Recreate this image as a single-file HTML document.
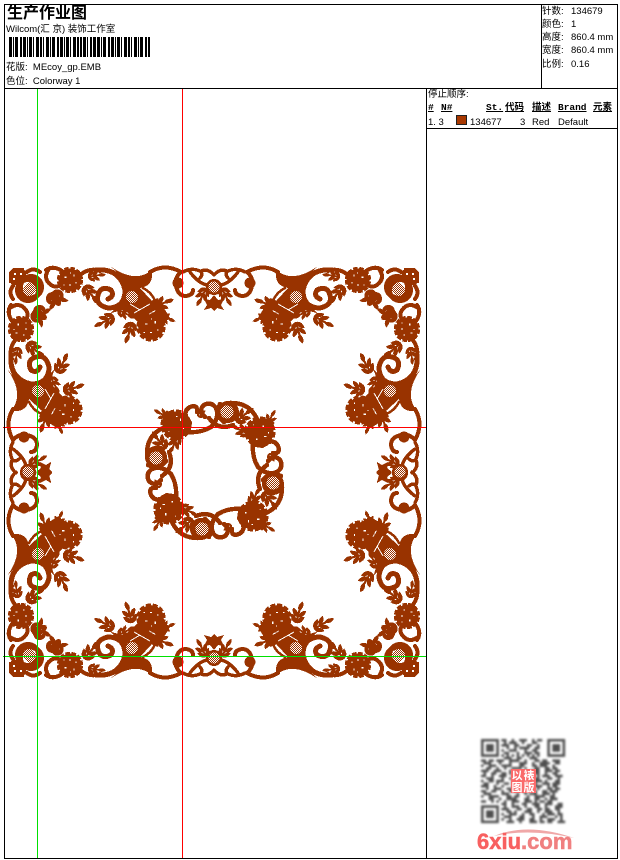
<!DOCTYPE html>
<html><head><meta charset="utf-8"><style>
html,body{margin:0;padding:0;background:#fff}
#p{position:relative;width:620px;height:860px;overflow:hidden;background:#fff;font:9px/12px "Liberation Sans","WenQuanYi Zen Hei","Noto Sans CJK SC",sans-serif;color:#000}
#p div{position:absolute;white-space:nowrap}
.b{background:#000}
.h{font:bold 9.5px/12px "Liberation Mono","WenQuanYi Zen Hei","Noto Sans CJK SC",monospace;text-decoration:underline}
svg{position:absolute;left:0;top:0}
</style></head><body><div id="p">
<svg width="620" height="860" viewBox="0 0 620 860">
<defs>
<pattern id="d" width="2" height="2" patternUnits="userSpaceOnUse"><rect width="2" height="2" fill="#930"/><rect width="1" height="1" fill="#fff"/><rect x="1" y="1" width="1" height="1" fill="#fff"/></pattern>
<g id="f"><circle r="10.5" fill="#930"/><circle r="10.5" fill="none" stroke="#930" stroke-width="3" stroke-dasharray="4 1.5"/><path d="M-5-3h2v1h-2zM3-5h1v2h-1zM-1 4h2v1h-2zM5 2h1v1h-1zM-6 4h1v1h-1zM0-7h1v1h-1z" fill="#fff"/></g>
<path id="l" d="M0 0Q0-6 8-7Q8-1 0 0Z" fill="#930"/>
<g id="s"><path d="M0 0L16 0" stroke="#930" stroke-width="2.2"/><use href="#l" x="0"/><use href="#l" transform="translate(0 0) scale(1 -1)"/><use href="#l" x="6"/><use href="#l" transform="translate(6 0) scale(1 -1)"/><use href="#l" transform="translate(12 0) rotate(45)"/></g>
<g id="a">
<path d="M9 272L14 268L24 268L25 277L21 285L12 285L9 280Z" fill="#930"/>
<path d="M14 273h2v2h-2zM19 272h2v2h-2zM14 279h2v2h-2z" fill="#fff"/>
<g fill="none" stroke="#930" stroke-width="4" stroke-linecap="round">
<circle cx="31" cy="287" r="10.5" stroke-width="5"/>
<path d="M27 272Q33 267 40 272"/>
<path d="M49 269Q42 278 51 285Q58 289 61 283"/>
<path d="M46 270Q53 265 62 271"/>
<path d="M80 275Q90 267 100 271"/>
<path d="M96 270Q120 268 125 290Q125 308 108 308Q95 305 98 295Q101 285 111 290Q115 296 108 299" stroke-width="5"/>
<path d="M150 272Q165 263 181 272Q174 278 176 286Q178 296 186 296Q193 295 193 290"/>
<path d="M183 272Q190 268 197 270Q205 272 200 278M190 272Q198 283 207 285M214 275Q208 268 201 271" stroke-width="3.4"/>
<path d="M137 296Q146 305 150 315M128 307Q135 318 142 322M143 288Q158 296 157 314" stroke-width="2.5"/>
</g>
<circle cx="31" cy="288" r="6" fill="url(#d)"/>
<use href="#f" transform="translate(70 280) scale(1.1)"/>
<path d="M110 266Q135 284 152 270Q154 286 140 288L151 300Q154 313 135 310Q118 309 108 315Q124 303 124 290Q123 276 110 266Z" fill="#930"/>
<path d="M126 311L158 298L170 318L160 326L138 322Z" fill="#930"/>
<path d="M134 313L150 304M142 318L160 308M130 304L140 310" stroke="#fff" stroke-width="1"/>
<circle cx="132" cy="297" r="6" fill="url(#d)"/>
<use href="#f" transform="translate(151 327) scale(1.22)"/>
<circle cx="178" cy="283" r="5.5" fill="#930"/>
<circle cx="214" cy="287" r="8" fill="#930"/><circle cx="214" cy="287" r="5.5" fill="url(#d)"/>
<path d="M214 295L218 300L224 299L221 305L224 310L217 308L214 311L211 308L204 310L207 305L204 299L210 300Z" fill="#930"/>
<use href="#s" transform="translate(60 290) rotate(115)"/>
<use href="#s" transform="translate(46 298) rotate(5)"/>
<use href="#s" transform="translate(84 286) rotate(50)"/>
<use href="#s" transform="translate(88 277) rotate(-10) scale(.8)"/>
<use href="#s" transform="translate(114 316) rotate(150)"/>
<use href="#s" transform="translate(118 310) rotate(25) scale(.8)"/>
<use href="#s" transform="translate(132 322) rotate(105)"/>
<use href="#s" transform="translate(153 308) rotate(-25)"/>
<use href="#s" transform="translate(158 316) rotate(15) scale(.8)"/>
<use href="#s" transform="translate(206 288) rotate(115) scale(.9)"/>
</g>
<g id="q"><use href="#a"/><use href="#a" transform="matrix(0 1 1 0 -259 259)"/></g>
<g id="w">
<use href="#f" transform="translate(176 425) scale(1.3)"/>
<g fill="none" stroke="#930" stroke-width="4.4" stroke-linecap="round">
<path d="M166 428Q195 437 211 427Q220 418 216 408Q211 401 204 405Q198 410 205 417"/>
<path d="M190 423Q181 412 190 407Q198 404 197 412"/>
<path d="M229 403Q248 402 256 417Q260 425 264 428"/>
<path d="M220 404Q215 415 224 422"/>
<path d="M209 418Q218 431 233 425"/>
</g>
<circle cx="228" cy="412" r="11" fill="#930"/><circle cx="227" cy="412" r="6.5" fill="url(#d)"/>
<use href="#s" transform="translate(170 418) rotate(205) scale(.8)"/>
<use href="#s" transform="translate(178 436) rotate(115) scale(.9)"/>
<use href="#s" transform="translate(236 422) rotate(-40)"/>
<use href="#s" transform="translate(200 418) rotate(-80) scale(.6)"/>
</g>
</defs>
<g shape-rendering="crispEdges">
<use href="#q"/><use href="#q" transform="matrix(-1 0 0 1 428 0)"/>
<use href="#q" transform="matrix(1 0 0 -1 0 945)"/><use href="#q" transform="matrix(-1 0 0 -1 428 945)"/>
<use href="#w"/><use href="#w" transform="rotate(90 214.5 470.5)"/><use href="#w" transform="rotate(180 214.5 470.5)"/><use href="#w" transform="rotate(270 214.5 470.5)"/>
<rect x="37" y="89" width="1" height="769" fill="#00e000"/>
<rect x="182" y="89" width="1" height="769" fill="#f00"/>
<rect x="3" y="427" width="423" height="1" fill="#f00"/>
<rect x="3" y="656" width="423" height="1" fill="#00e000"/>
<line x1="9" x2="150" y1="47" y2="47" stroke="#000" stroke-width="20" stroke-dasharray="3 1 1 1 3 2 2 1 3 1 1 1 3 1 1 2 3 1 2 1 1 2 3 1 1 1 3 2 2 1 3 1 1 1 3 1 1 2 3 1 2 1 2 1 3 1 1 2 2 1 3 1"/>
</g>
<g transform="translate(481 739) scale(2.55)" opacity=".8" style="filter:blur(.4px)">
<path fill="#222" fill-rule="evenodd" d="M0 0h7v7h-7zM1 1v5h5v-5zM2 2h3v3h-3zM26 0h7v7h-7zM27 1v5h5v-5zM28 2h3v3h-3zM0 26h7v7h-7zM1 27v5h5v-5zM2 28h3v3h-3z"/>
<path fill="none" stroke="#222" stroke-width="1" d="M8 .5h2m2 0h1m2 0h3m2 0h1m1 0h2M9 1.5h1m1 0h3m2 0h1m3 0h2M8 2.5h3m2 0h2m3 0h2m2 0h1M10 3.5h1m2 0h1m1 0h4m2 0h2M8 4.5h1m2 0h3m3 0h1m2 0h2M9 5.5h2m3 0h1m2 0h3m1 0h2M8 6.5h1m1 0h1m1 0h1m1 0h1m1 0h1m1 0h1m1 0h1m1 0h1M9 7.5h3m2 0h2m3 0h3M0 8.5h2m1 0h2m1 0h3m2 0h4m2 0h1m3 0h2m1 0h2m2 0h3M1 9.5h3m3 0h1m3 0h1m3 0h3m2 0h1m2 0h4m2 0h2M0 10.5h1m2 0h3m2 0h4m3 0h2m3 0h2m1 0h3m2 0h1M2 11.5h2m2 0h1m2 0h1m2 0h4m1 0h1m3 0h2m2 0h2m1 0h2M0 12.5h3m2 0h3m3 0h1m7 0h4m2 0h3m1 0h2M1 13.5h1m2 0h2m2 0h2m1 0h1m9 0h2m2 0h1m2 0h2M0 14.5h2m2 0h1m2 0h3m2 0h1m9 0h1m1 0h3m2 0h3M2 15.5h3m3 0h1m2 0h1m9 0h2m3 0h2m2 0h1M0 16.5h1m2 0h2m1 0h3m3 0h1m8 0h3m1 0h1m3 0h2M1 17.5h2m3 0h1m2 0h2m1 0h1m8 0h1m2 0h3m1 0h3M0 18.5h3m2 0h1m2 0h1m3 0h1m8 0h3m2 0h1m1 0h2M2 19.5h1m2 0h3m2 0h2m10 0h1m3 0h2m1 0h2M0 20.5h2m2 0h2m2 0h1m2 0h3m2 0h3m2 0h1m2 0h2m1 0h3M1 21.5h3m4 0h3m3 0h1m2 0h1m1 0h3m2 0h3m1 0h1M0 22.5h1m2 0h4m3 0h2m1 0h2m3 0h1m2 0h4m2 0h2M3 23.5h2m2 0h1m2 0h4m3 0h2m2 0h2m2 0h1m1 0h3M0 24.5h2m2 0h1m1 0h1m2 0h1m2 0h3m2 0h3m1 0h1m1 0h2m1 0h2M8 25.5h2m2 0h1m3 0h2m2 0h3m2 0h3m2 0h2M9 26.5h1m2 0h3m2 0h1m3 0h2m2 0h1m3 0h3M8 27.5h3m3 0h2m2 0h2m2 0h2m1 0h2m2 0h2M10 28.5h2m1 0h1m3 0h3m2 0h1m2 0h3m2 0h1M8 29.5h1m2 0h3m2 0h1m2 0h2m3 0h1m1 0h3m1 0h2M9 30.5h3m3 0h2m3 0h1m2 0h3m3 0h1m1 0h1M8 31.5h1m2 0h1m2 0h3m2 0h2m2 0h1m2 0h3m2 0h1M10 32.5h3m2 0h1m3 0h3m1 0h2m1 0h2m2 0h3"/>
</g>
<rect x="511" y="769" width="25" height="24" fill="#fa6a6a"/>
<path d="M494 836Q528 822 574 838Q530 828 494 836Z" fill="#f0a8a8"/>
<text x="477" y="849" font-family="Liberation Sans" font-weight="bold" font-size="22" fill="#f86060" stroke="#f86060" stroke-width=".5">6xiu<tspan fill="#f08080" stroke="#f08080">.com</tspan></text>
</svg>

<div style="left:511px;top:769px;width:25px;height:24px;font:bold 11px/12px 'WenQuanYi Zen Hei','Noto Sans CJK SC',sans-serif;color:#fff;white-space:normal;text-align:center;letter-spacing:1px">以裱<br>图版</div>

<div class="b" style="left:4px;top:4px;width:614px;height:1px"></div>
<div class="b" style="left:4px;top:858px;width:614px;height:1px"></div>
<div class="b" style="left:4px;top:4px;width:1px;height:855px"></div>
<div class="b" style="left:617px;top:4px;width:1px;height:855px"></div>
<div class="b" style="left:4px;top:88px;width:614px;height:1px"></div>
<div class="b" style="left:541px;top:4px;width:1px;height:84px"></div>
<div class="b" style="left:426px;top:88px;width:1px;height:771px"></div>
<div class="b" style="left:426px;top:128px;width:192px;height:1px"></div>

<div style="left:7px;top:3px;font:bold 16px/17px 'WenQuanYi Zen Hei','Noto Sans CJK SC',sans-serif">生产作业图</div>
<div style="left:6px;top:24px;font-size:9.5px">Wilcom(汇 京) 装饰工作室</div>
<div style="left:6px;top:62px;font-size:9.5px">花版:&nbsp; MEcoy_gp.EMB</div>
<div style="left:6px;top:76px;font-size:9.5px">色位:&nbsp; Colorway 1</div>

<div style="left:542px;top:6px;font-size:9.5px">针数:</div><div style="left:571px;top:6px;font-size:9.5px">134679</div>
<div style="left:542px;top:19px;font-size:9.5px">颜色:</div><div style="left:571px;top:19px;font-size:9.5px">1</div>
<div style="left:542px;top:32px;font-size:9.5px">高度:</div><div style="left:571px;top:32px;font-size:9.5px">860.4 mm</div>
<div style="left:542px;top:45px;font-size:9.5px">宽度:</div><div style="left:571px;top:45px;font-size:9.5px">860.4 mm</div>
<div style="left:542px;top:59px;font-size:9.5px">比例:</div><div style="left:571px;top:59px;font-size:9.5px">0.16</div>

<div style="left:428px;top:89px;font-size:9.5px">停止顺序:</div>
<div class="h" style="left:428px;top:102px">#</div>
<div class="h" style="left:441px;top:102px">N#</div>
<div class="h" style="left:486px;top:102px">St.</div>
<div class="h" style="left:505px;top:102px">代码</div>
<div class="h" style="left:532px;top:102px">描述</div>
<div class="h" style="left:558px;top:102px">Brand</div>
<div class="h" style="left:593px;top:102px">元素</div>
<div style="left:428px;top:117px;font-size:9.5px">1. 3</div>
<div style="left:456px;top:115px;width:9px;height:8px;background:#a83800;border:1px solid #222"></div>
<div style="left:470px;top:117px;font-size:9.5px">134677</div>
<div style="left:520px;top:117px;font-size:9.5px">3</div>
<div style="left:532px;top:117px;font-size:9.5px">Red</div>
<div style="left:558px;top:117px;font-size:9.5px">Default</div>
</div></body></html>
